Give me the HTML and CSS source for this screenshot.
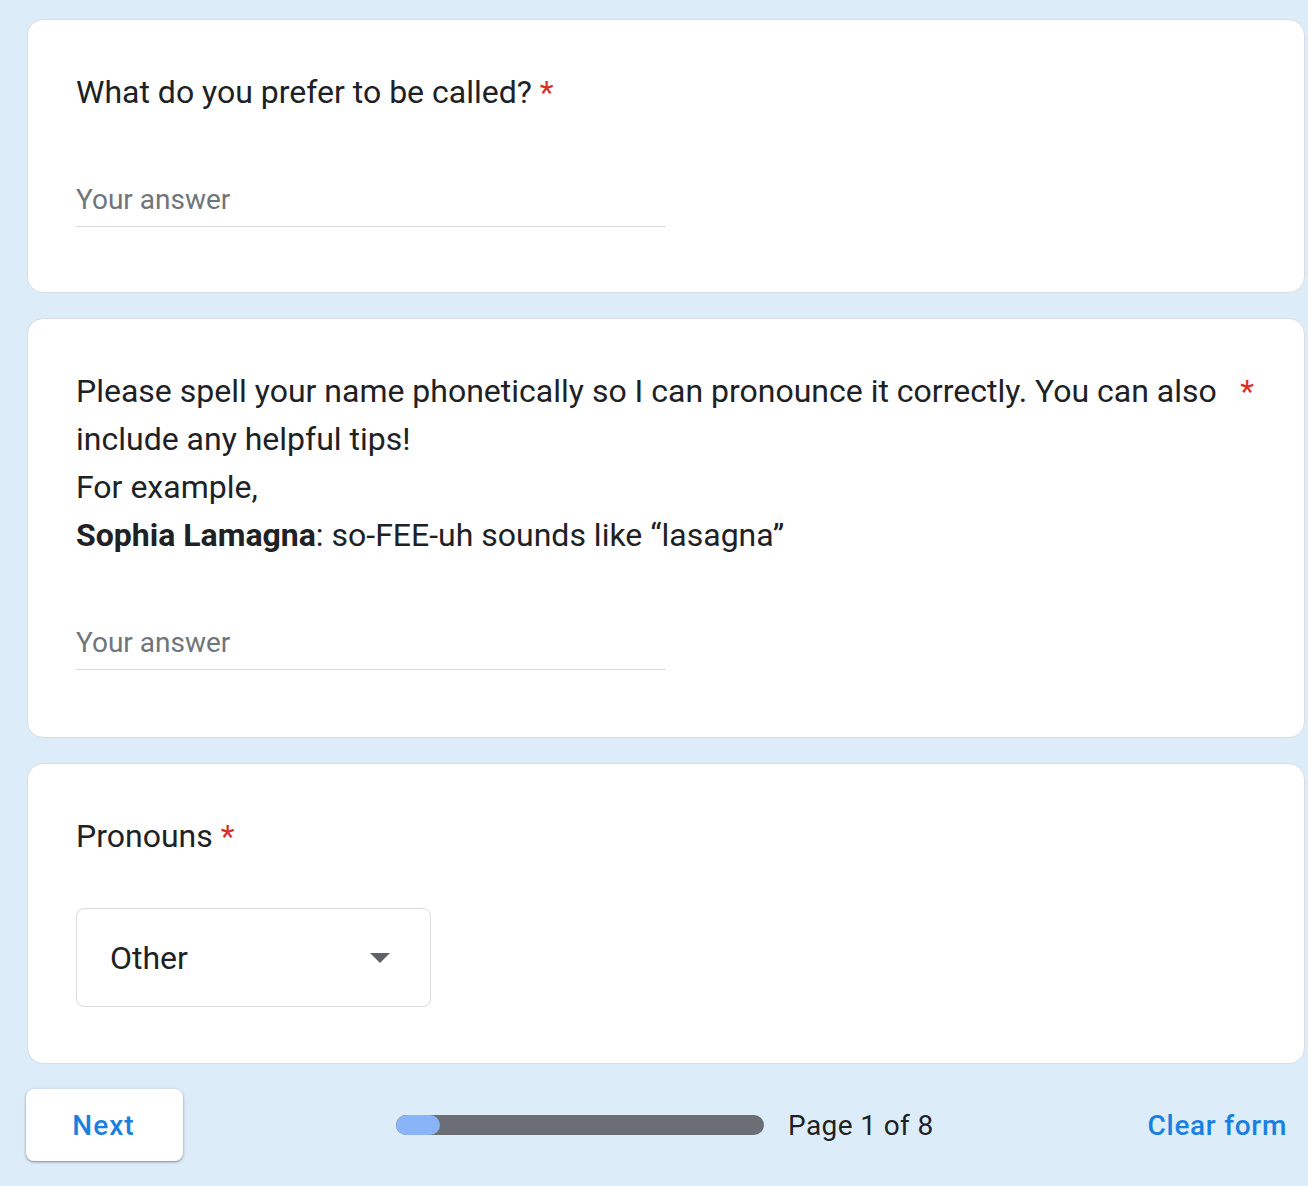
FILE: index.html
```html
<!DOCTYPE html>
<html>
<head>
<meta charset="utf-8">
<link rel="stylesheet" href="styles.css">
</head>
<body>
<div class="page">
  <div class="card">
    <div class="title">What do you prefer to be called? <span class="req">*</span></div>
    <div class="input"><span class="ph">Your answer</span></div>
  </div>
  <div class="card card-tall">
    <div class="title-row">
      <div class="title">Please spell your name phonetically so I can pronounce it correctly. You can also include any helpful tips!<br>For example,<br><b>Sophia Lamagna</b>: so-FEE-uh sounds like “lasagna”</div>
      <span class="req req-side">*</span>
    </div>
    <div class="input"><span class="ph">Your answer</span></div>
  </div>
  <div class="card">
    <div class="title">Pronouns <span class="req">*</span></div>
    <div class="select">
      <span class="sel-text">Other</span>
      <svg class="arrow" width="20" height="10" viewBox="0 0 20 10"><path d="M0 0 L20 0 L10 10 Z" fill="#5f6368"/></svg>
    </div>
  </div>
  <div class="footer">
    <button class="next">Next</button>
    <div class="progress">
      <div class="bar"><div class="fill"></div></div>
      <span class="pagetext">Page 1 of 8</span>
    </div>
    <span class="clear">Clear form</span>
  </div>
</div>
</body>
</html>
```

FILE: styles.css
```css
html, body {
  margin: 0;
  padding: 0;
  background: #dcedf9;
  font-family: Roboto, "Liberation Sans", sans-serif;
  color: #202124;
}
.page {
  padding: 19px 3px 26px 27px;
  display: flex;
  flex-direction: column;
  gap: 25px;
}
.card {
  background: #fff;
  border: 1px solid #dadce0;
  border-radius: 16px;
  padding: 48px 48px 48px;
}
.title {
  font-size: 32px;
  line-height: 48px;
  font-weight: 400;
}
.title b { font-weight: 700; }
.req { color: #d93025; }
.title-row {
  display: flex;
  align-items: flex-start;
  gap: 16px;
}
.title-row .title { flex: 1; }
.req-side {
  font-size: 32px;
  line-height: 48px;
  margin-right: 2px;
}
.input {
  width: 50%;
  margin-top: 64px;
  margin-bottom: 17px;
  border-bottom: 1px solid #dadce0;
  height: 46px;
}
.card-tall .input {
  margin-bottom: 19px;
}
.ph {
  display: block;
  font-size: 28px;
  line-height: 40px;
  color: #70757a;
}
.select {
  margin-top: 48px;
  width: 355px;
  height: 99px;
  box-sizing: border-box;
  border: 1px solid #dadce0;
  border-radius: 8px;
  display: flex;
  align-items: center;
  padding: 0 40px 0 33px;
  margin-bottom: 8px;
}
.sel-text {
  flex: 1;
  font-size: 32px;
}
.arrow { display: block; }
.footer {
  display: flex;
  align-items: center;
  margin-left: -1px;
}
.next {
  width: 157px;
  height: 72px;
  background: #fff;
  border: none;
  border-radius: 8px;
  box-shadow: 0 1px 2px rgba(60,64,67,0.45), 0 1px 3px 1px rgba(60,64,67,0.12);
  color: #1a80e0;
  font-family: Roboto, "Liberation Sans", sans-serif;
  font-size: 28px;
  font-weight: 500;
  letter-spacing: 1px;
  padding: 0 2px 0 0;
}
.progress {
  display: flex;
  align-items: center;
  margin-left: 213px;
  gap: 24px;
}
.bar {
  width: 368px;
  height: 20px;
  border-radius: 10px;
  background: #6b6e74;
  overflow: hidden;
}
.fill {
  width: 44px;
  height: 100%;
  background: #8ab4f8;
  border-radius: 10px;
}
.pagetext {
  font-size: 28px;
  letter-spacing: 0.4px;
  color: #202124;
}
.clear {
  margin-left: auto;
  margin-right: 18px;
  color: #1a80e0;
  font-size: 28px;
  font-weight: 500;
  letter-spacing: 0.7px;
}
```
